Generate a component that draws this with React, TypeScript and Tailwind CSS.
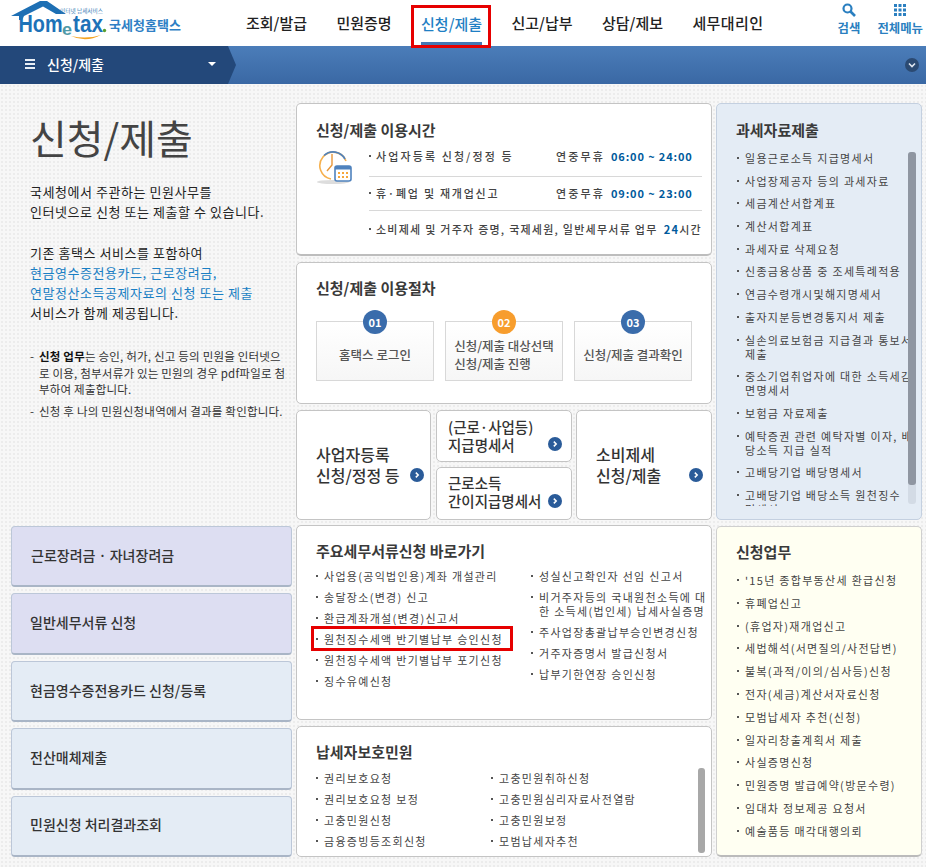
import React from "react";

const F = "font-['Noto_Sans_CJK_KR','Noto_Sans',sans-serif]";

function Logo() {
  return (
    <svg width="186" height="46" viewBox="0 0 186 46" className="shrink-0">
      <path d="M11 16 L40 1 L47 1 L66 14 L56 14 L43 6.5 L24 16 L22 20 L19 20 L19 16 Z" fill="#1d6fb4" />
      <text x="18.5" y="32" fontFamily="'Liberation Sans',sans-serif" fontWeight="700" fontSize="24" fill="#1d72b8" textLength="44" lengthAdjust="spacingAndGlyphs">Hom</text>
      <text x="62" y="35" fontFamily="'Liberation Sans',sans-serif" fontWeight="700" fontSize="17" fill="#4f9aa8" textLength="10" lengthAdjust="spacingAndGlyphs">e</text>
      <text x="73" y="32" fontFamily="'Liberation Sans',sans-serif" fontWeight="700" fontSize="23" fill="#1d72b8" textLength="30" lengthAdjust="spacingAndGlyphs">tax</text>
      <circle cx="104.5" cy="30.5" r="1.7" fill="#5a9e2f" />
      <path d="M71 36 Q86 43 101 35 Q87 39.5 71 36 Z" fill="#f4a21e" />
      <text x="60" y="13" fontFamily="'Noto Sans CJK KR',sans-serif" fontSize="5.2" fill="#3b7db5" textLength="43" lengthAdjust="spacingAndGlyphs">인터넷 납세서비스</text>
      <text x="109" y="30" fontFamily="'Noto Sans CJK KR',sans-serif" fontWeight="700" fontSize="13" fill="#2f80c5" textLength="72">국세청홈택스</text>
    </svg>
  );
}

function Dot({ className = "" }: { className?: string }) {
  return <span className={`inline-block w-[2px] h-[2px] bg-[#555] shrink-0 ${className}`} />;
}

function Item({ children, red }: { children: React.ReactNode; red?: boolean }) {
  return (
    <li className="relative flex items-start whitespace-nowrap">
      <Dot className="mt-[6px] mr-[6px]" />
      <span>{children}</span>
      {red && <span className="absolute left-[-5px] top-[-6px] w-[202px] h-[25px] border-[3px] border-[#e60000]" />}
    </li>
  );
}

function Arrow() {
  return (
    <svg width="14" height="14" viewBox="0 0 14 14" className="shrink-0">
      <circle cx="7" cy="7" r="7" fill="#2a5b99" />
      <path d="M5.8 4.6 L8.2 7 L5.8 9.4" fill="none" stroke="#fff" strokeWidth="1.5" />
    </svg>
  );
}

function Clock() {
  return (
    <svg width="38" height="34" viewBox="0 0 38 34" className="shrink-0">
      <ellipse cx="17" cy="31" rx="16" ry="2" fill="#ddd" />
      <path d="M30 10 A13.5 13.5 0 1 0 15 28" fill="none" stroke="#f6b04d" strokeWidth="1.6" />
      <path d="M8 4.5 A13.5 13.5 0 0 1 29 8" fill="none" stroke="#4f82bd" strokeWidth="1.6" />
      <path d="M16 3 V14 L11 20" fill="none" stroke="#e8973a" strokeWidth="1.4" />
      <rect x="19" y="15" width="16" height="15" rx="2" fill="#fff" stroke="#4f82bd" strokeWidth="1.6" />
      <rect x="19" y="15" width="16" height="3.5" fill="#4f82bd" />
      <path d="M22 22 h2 M26 22 h2 M30 22 h2 M22 26 h2 M26 26 h2 M30 26 h2" stroke="#f6a73c" strokeWidth="2" />
    </svg>
  );
}

function Step({ n, orange, children }: { n: string; orange?: boolean; children: React.ReactNode }) {
  return (
    <div className="relative w-[118px] h-[60px] border border-[#d8d8d8] bg-gradient-to-b from-white to-[#f6f6f6] flex items-center justify-center text-[12.5px] leading-[18px] text-[#555] font-medium pt-[7px]">
      <span className={`absolute left-[46px] top-[-12px] w-[24px] h-[24px] rounded-full flex items-center justify-center text-white text-[11px] font-bold ${orange ? "bg-[#f79d2d]" : "bg-[#3a6cab]"}`}>{n}</span>
      <div>{children}</div>
    </div>
  );
}

function Side({ c, children }: { c: string; children: React.ReactNode }) {
  return (
    <div className={`h-[62px] rounded-[4px] border border-[#bcc7d8] border-b-[2px] border-b-[#a9b5c6] ${c} flex items-center pl-[18px] pb-[2px] text-[14px] font-medium text-[#333]`}>
      {children}
    </div>
  );
}

function Row({ label, track, time, h, pb }: { label: string; track: string; time: string; h: string; pb: string }) {
  return (
    <div className={`${h} ${pb} flex items-center border-b border-[#d8d8d8] whitespace-nowrap`}>
      <Dot className="mr-[5px]" />
      <span className={`w-[180px] ${track}`}>{label}</span>
      <span className="w-[55px] tracking-[2.1px]">연중무휴</span>
      <span className="text-[#005a9c] font-bold tracking-[.85px]">{time}</span>
    </div>
  );
}

const card = "bg-white rounded-[5px] border border-[#c4c4c4]";
const title = "text-[15px] leading-[20px] font-bold text-[#3a3a3a]";
const list = "tracking-[1.3px] text-[11px] leading-[14px] text-[#444] list-none";

export default function App() {
  return (
    <div className={`${F} relative w-[926px] h-[867px] overflow-hidden bg-[#f7f7f7] bg-[radial-gradient(#ececec_1px,transparent_1px)] bg-[length:4px_4px]`}>
      <header className="h-[46px] bg-white flex">
        <div className="w-[246px] shrink-0"><Logo /></div>
        <nav className="flex gap-[29.4px] text-[15px] font-medium text-[#222] leading-[46px]">
          <span>조회/발급</span>
          <span>민원증명</span>
          <span className="relative text-[#1f7fc4] border-b-[4px] border-[#4478b4] h-[46px] leading-[47px]">
            신청/제출
            <span className="absolute left-[-10px] top-[5px] w-[80px] h-[43px] border-[3px] border-[#e60000] z-10" />
          </span>
          <span>신고/납부</span>
          <span>상담/제보</span>
          <span className="tracking-[.4px]">세무대리인</span>
        </nav>
        <div className="ml-auto flex gap-[17px] pr-[3px] text-[12.4px] font-bold text-[#2a7fc0]">
          <div className="flex flex-col items-center pt-[3px]">
            <svg width="14" height="14" viewBox="0 0 14 14"><circle cx="5.5" cy="5.5" r="4" fill="none" stroke="#2a7fc0" strokeWidth="2.2" /><path d="M8.5 8.5 L13 13" stroke="#2a7fc0" strokeWidth="2.6" /></svg>
            <span className="mt-[3px] leading-[16px]">검색</span>
          </div>
          <div className="flex flex-col items-center pt-[3px]">
            <svg width="14" height="14" viewBox="0 0 14 14" fill="#2a7fc0">
              <rect x="1" y="1" width="3" height="3" /><rect x="5.5" y="1" width="3" height="3" /><rect x="10" y="1" width="3" height="3" />
              <rect x="1" y="5.5" width="3" height="3" /><rect x="5.5" y="5.5" width="3" height="3" /><rect x="10" y="5.5" width="3" height="3" />
              <rect x="1" y="10" width="3" height="3" /><rect x="5.5" y="10" width="3" height="3" /><rect x="10" y="10" width="3" height="3" />
            </svg>
            <span className="mt-[3px] leading-[16px]">전체메뉴</span>
          </div>
        </div>
      </header>

      <div className="h-[38px] bg-gradient-to-b from-[#4b7db9] to-[#3a68a4] flex items-center">
        <div className="w-[228px] h-full bg-[#23487a] flex items-center pb-[2px] text-white text-[14px] font-medium border-l-[11px] border-l-[#23487a] shrink-0">
          <svg width="12" height="10" viewBox="0 0 12 10" className="ml-[14px] mr-[10px]" fill="#e8eef6"><rect x="0" y="0" width="10" height="2" /><rect x="0" y="4" width="10" height="2" /><rect x="0" y="8" width="10" height="2" /></svg>
          <span>신청/제출</span>
          <svg width="8" height="4" viewBox="0 0 8 4" className="ml-auto mr-[12px]"><path d="M0 0 H8 L4 4 Z" fill="#fff" /></svg>
        </div>
        <svg width="9" height="38" viewBox="0 0 9 38" className="shrink-0"><path d="M0 0 L8 19 L0 38 Z" fill="#23487a" /></svg>
        <svg width="14" height="14" viewBox="0 0 14 14" className="ml-auto mr-[7px] mb-[1px]"><circle cx="7" cy="7" r="7" fill="#2b4a72" /><path d="M4 5.5 L7 8.5 L10 5.5" fill="none" stroke="#dfe6ef" strokeWidth="1.6" /></svg>
      </div>

      <main className="grid grid-cols-[281px_416px_206px] grid-rows-[417px_332px] gap-x-[4px] gap-y-[5px] pl-[11px] pt-[19px]">
        <section className="pl-[19px]">
          <h1 className="text-[40px] leading-[50px] mt-[9px] text-[#444] font-normal">신청/제출</h1>
          <div className="mt-[20px] text-[13px] tracking-[.55px] leading-[20px] text-[#222]">
            <p>국세청에서 주관하는 민원사무를</p>
            <p>인터넷으로 신청 또는 제출할 수 있습니다.</p>
            <p className="mt-[21px]">기존 홈택스 서비스를 포함하여</p>
            <p className="text-[#1a7fc4]">현금영수증전용카드, 근로장려금,</p>
            <p className="text-[#1a7fc4]">연말정산소득공제자료의 신청 또는 제출</p>
            <p>서비스가 함께 제공됩니다.</p>
          </div>
          <ul className="mt-[25px] text-[11.5px] tracking-[.2px] leading-[16.6px] text-[#333] whitespace-nowrap">
            <li className="flex"><span className="w-[9px] shrink-0">-</span><span><b className="text-[#111]">신청 업무</b>는 승인, 허가, 신고 등의 민원을 인터넷으<br />로 이용, 첨부서류가 있는 민원의 경우 pdf파일로 첨<br />부하여 제출합니다.</span></li>
            <li className="flex mt-[5px]"><span className="w-[9px] shrink-0">-</span><span>신청 후 나의 민원신청내역에서 결과를 확인합니다.</span></li>
          </ul>
        </section>

        <div className="flex flex-col gap-[6px]">
          <section className={`${card} border-b-[2px] border-b-[#bdbdbd] h-[154px] pl-[19px] pr-[9px] pt-[16px]`}>
            <h2 className={title}>신청/제출 이용시간</h2>
            <div className="flex mt-[5px]">
              <div className="w-[53px] pt-[6px] shrink-0"><Clock /></div>
              <div className="flex-1 text-[11px] text-[#444] font-medium">
                <Row label="사업자등록 신청/정정 등" track="tracking-[2.1px]" time="06:00 ~ 24:00" h="h-[32px]" pb="pb-[9px]" />
                <Row label="휴·폐업 및 재개업신고" track="tracking-[1.75px]" time="09:00 ~ 23:00" h="h-[34px]" pb="pb-[1px]" />
                <div className="h-[36px] flex items-center whitespace-nowrap tracking-[1.25px]">
                  <Dot className="mr-[5px]" />
                  <span>소비제세 및 거주자 증명, 국제세원, 일반세무서류 업무</span>
                  <span className="ml-auto"><b className="text-[#005a9c]">24</b>시간</span>
                </div>
              </div>
            </div>
          </section>

          <section className={`${card} h-[142px] pl-[19px] pt-[15px]`}>
            <h2 className={title}>신청/제출 이용절차</h2>
            <div className="flex gap-[11px] mt-[23px]">
              <Step n="01">홈택스 로그인</Step>
              <Step n="02" orange>신청/제출 대상선택<br />신청/제출 진행</Step>
              <Step n="03">신청/제출 결과확인</Step>
            </div>
          </section>

          <div className="flex h-[110px] font-medium text-[#333]">
            <div className={`${card} w-[135px] flex items-center pl-[19px] pr-[6px] pb-[1px] text-[16px] leading-[21px]`}>
              <span className="whitespace-nowrap">사업자등록<br />신청/정정 등</span>
              <span className="ml-auto mt-[20px]"><Arrow /></span>
            </div>
            <div className="w-[136px] ml-[5px] flex flex-col gap-[5px] text-[14.5px] leading-[18px]">
              <div className={`${card} h-[52px] flex items-center pl-[11px] pr-[9px] whitespace-nowrap`}>
                <span>(근로·사업등)<br />지급명세서</span><span className="ml-auto mt-[15px]"><Arrow /></span>
              </div>
              <div className={`${card} h-[53px] flex items-center pl-[11px] pr-[9px] pb-[3px] whitespace-nowrap`}>
                <span>근로소득<br />간이지급명세서</span><span className="ml-auto mt-[18px]"><Arrow /></span>
              </div>
            </div>
            <div className={`${card} w-[136px] ml-[4px] flex items-center pl-[19px] pr-[8px] text-[16px] leading-[21px]`}>
              <span className="whitespace-nowrap">소비제세<br />신청/제출</span>
              <span className="ml-auto mt-[20px]"><Arrow /></span>
            </div>
          </div>
        </div>

        <section className="relative bg-[#e4ecf5] rounded-[5px] border border-[#c4d0e0] pl-[19px] pt-[16px]">
          <h2 className={title}>과세자료제출</h2>
          <div className="h-[355px] overflow-hidden mt-[11px] pl-[1px]">
            <ul className={`${list} flex flex-col gap-[8.7px]`}>
              <Item>일용근로소득 지급명세서</Item>
              <Item>사업장제공자 등의 과세자료</Item>
              <Item>세금계산서합계표</Item>
              <Item>계산서합계표</Item>
              <Item>과세자료 삭제요청</Item>
              <Item>신종금융상품 중 조세특례적용</Item>
              <Item>연금수령개시및해지명세서</Item>
              <Item>출자지분등변경통지서 제출</Item>
              <Item>실손의료보험금 지급결과 통보서<br />제출</Item>
              <Item>중소기업취업자에 대한 소득세감<br />면명세서</Item>
              <Item>보험금 자료제출</Item>
              <Item>예탁증권 관련 예탁자별 이자, 배<br />당소득 지급 실적</Item>
              <Item>고배당기업 배당명세서</Item>
              <Item>고배당기업 배당소득 원천징수<br />명세서</Item>
            </ul>
          </div>
          <div className="absolute left-[191px] top-[48px] w-[8px] h-[352px] rounded-[3px] bg-[#d3dbe5]">
            <div className="w-[8px] h-[333px] rounded-[3px] bg-[#8f96a1]" />
          </div>
        </section>

        <div className="mt-[1px] flex flex-col gap-[6px]">
          <Side c="bg-[#dddef2]"><span className="pl-[1px]">근로장려금 · 자녀장려금</span></Side>
          <Side c="bg-[#dddef2]">일반세무서류 신청</Side>
          <Side c="bg-[#e4ecf5]">현금영수증전용카드 신청/등록</Side>
          <Side c="bg-[#e4ecf5]">전산매체제출</Side>
          <Side c="bg-[#e4ecf5]">민원신청 처리결과조회</Side>
        </div>

        <div className="flex flex-col gap-[6px]">
          <section className={`${card} h-[196px] pl-[19px] pt-[15px]`}>
            <h2 className={title}>주요세무서류신청 바로가기</h2>
            <div className="flex mt-[8px]">
              <ul className={`${list} w-[215px] flex flex-col gap-[7px]`}>
                <Item>사업용(공익법인용)계좌 개설관리</Item>
                <Item>송달장소(변경) 신고</Item>
                <Item>환급계좌개설(변경)신고서</Item>
                <Item red>원천징수세액 반기별납부 승인신청</Item>
                <Item>원천징수세액 반기별납부 포기신청</Item>
                <Item>징수유예신청</Item>
              </ul>
              <ul className={`${list} flex flex-col gap-[7px]`}>
                <Item>성실신고확인자 선임 신고서</Item>
                <Item>비거주자등의 국내원천소득에 대<br />한 소득세(법인세) 납세사실증명</Item>
                <Item>주사업장총괄납부승인변경신청</Item>
                <Item>거주자증명서 발급신청서</Item>
                <Item>납부기한연장 승인신청</Item>
              </ul>
            </div>
          </section>
          <section className={`${card} relative h-[131px] pl-[19px] pt-[15px]`}>
            <h2 className={title}>납세자보호민원</h2>
            <div className="flex mt-[9px]">
              <ul className={`${list} w-[175px] flex flex-col gap-[7px]`}>
                <Item>권리보호요청</Item>
                <Item>권리보호요청 보정</Item>
                <Item>고충민원신청</Item>
                <Item>금융증빙등조회신청</Item>
              </ul>
              <ul className={`${list} flex flex-col gap-[7px]`}>
                <Item>고충민원취하신청</Item>
                <Item>고충민원심리자료사전열람</Item>
                <Item>고충민원보정</Item>
                <Item>모범납세자추천</Item>
              </ul>
            </div>
            <div className="absolute left-[401px] top-[41px] w-[7px] h-[85px] rounded-[3px] bg-[#a8a8a8]" />
          </section>
        </div>

        <section className="mt-[1px] bg-[#fffff2] rounded-[5px] border border-[#cfcfcf] border-b-[2px] border-b-[#bbb] pl-[19px] pt-[15px]">
          <h2 className={title}>신청업무</h2>
          <ul className={`${list} flex flex-col gap-[8.8px] mt-[11px] pl-[1px]`}>
            <Item>'15년 종합부동산세 환급신청</Item>
            <Item>휴폐업신고</Item>
            <Item>(휴업자)재개업신고</Item>
            <Item>세법해석(서면질의/사전답변)</Item>
            <Item>불복(과적/이의/심사등)신청</Item>
            <Item>전자(세금)계산서자료신청</Item>
            <Item>모범납세자 추천(신청)</Item>
            <Item>일자리창출계획서 제출</Item>
            <Item>사실증명신청</Item>
            <Item>민원증명 발급예약(방문수령)</Item>
            <Item>임대차 정보제공 요청서</Item>
            <Item>예술품등 매각대행의뢰</Item>
          </ul>
        </section>
      </main>
    </div>
  );
}
